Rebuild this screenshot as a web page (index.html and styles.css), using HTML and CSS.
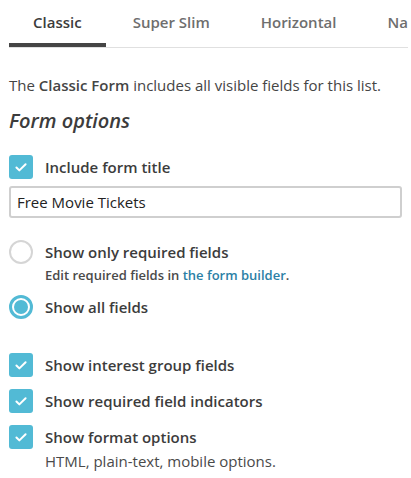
FILE: index.html
```html
<!doctype html>
<html>

<head>
    <meta charset="utf-8">
    <title>Form options</title>
    <meta name="viewport" content="width=device-width,initial-scale=1">
    <link rel="stylesheet" href="styles.css">
</head>

<body>
    <div class="tabs">
        <div class="tab active">Classic</div>
        <div class="tab">Super Slim</div>
        <div class="tab">Horizontal</div>
        <div class="tab">Naked</div>
    </div>

    <p class="intro">The <strong>Classic Form</strong> includes all visible fields for this list.</p>
    <h2 class="heading">Form options</h2>

    <label class="option">
        <span class="check checked">
            <svg viewBox="0 0 24 24" aria-hidden="true"><path d="M7 12.5l3.2 3.2L17 9" /></svg>
        </span>
        <span class="label">Include form title</span>
    </label>
    <input type="text" class="input" value="Free Movie Tickets">

    <div class="radios">
        <label class="option">
            <span class="radio"></span>
            <span class="label">Show only required fields</span>
        </label>
        <div class="hint">Edit required fields in <a href="#">the form builder</a>.</div>
        <label class="option">
            <span class="radio selected"></span>
            <span class="label">Show all fields</span>
        </label>
    </div>

    <div class="checks">
        <label class="option">
            <span class="check checked">
                <svg viewBox="0 0 24 24" aria-hidden="true"><path d="M7 12.5l3.2 3.2L17 9" /></svg>
            </span>
            <span class="label">Show interest group fields</span>
        </label>
        <label class="option">
            <span class="check checked">
                <svg viewBox="0 0 24 24" aria-hidden="true"><path d="M7 12.5l3.2 3.2L17 9" /></svg>
            </span>
            <span class="label">Show required field indicators</span>
        </label>
        <label class="option">
            <span class="check checked">
                <svg viewBox="0 0 24 24" aria-hidden="true"><path d="M7 12.5l3.2 3.2L17 9" /></svg>
            </span>
            <span class="label">Show format options</span>
        </label>
        <div class="note">HTML, plain-text, mobile options.</div>
    </div>
</body>

</html>
```

FILE: styles.css
```css
body {
    margin: 0;
    padding: 0 9px;
    width: 411px;
    box-sizing: border-box;
    overflow: hidden;
    font-family: "Open Sans", Arial, sans-serif;
    font-size: 15px;
    color: #454545;
    background: #fff;
}

/* Tabs */
.tabs {
    display: flex;
    white-space: nowrap;
    border-bottom: 1px solid #e0e0e0;
    height: 48px;
    box-sizing: border-box;
    margin-right: -6px;
    overflow: hidden;
}

.tab {
    padding: 12px 24px 0;
    margin-right: 3px;
    font-size: 15px;
    font-weight: 600;
    color: #6e6e6e;
    border-bottom: 5px solid transparent;
    margin-bottom: -1px;
}

.tab.active {
    color: #3c3c3c;
    border-bottom-color: #454545;
}

.intro {
    margin: 27px 0 0;
    line-height: 20px;
}

.intro strong {
    font-weight: 600;
}

.heading {
    margin: 12px 0 0;
    font-size: 20px;
    font-style: italic;
    font-weight: 600;
    line-height: 28px;
    color: #3c3c3c;
}

/* Checkbox / radio rows */
.option {
    display: flex;
    align-items: center;
    gap: 12px;
    height: 24px;
}

.label {
    font-size: 15px;
    font-weight: 600;
    color: #3c3c3c;
}

.heading + .option {
    margin-top: 20px;
}

.check {
    width: 24px;
    height: 24px;
    border-radius: 3px;
    background: #52bad5;
    display: flex;
    align-items: center;
    justify-content: center;
    flex: none;
}

.check svg {
    width: 22px;
    height: 22px;
    fill: none;
    stroke: #fff;
    stroke-width: 2.2;
    stroke-linecap: round;
    stroke-linejoin: round;
}

.radio {
    width: 24px;
    height: 24px;
    box-sizing: border-box;
    border-radius: 50%;
    border: 2px solid #d5d5d5;
    flex: none;
    position: relative;
}

.radio.selected {
    border: 3px solid #52bad5;
}

.radio.selected::after {
    content: "";
    position: absolute;
    left: 2px;
    top: 2px;
    width: 14px;
    height: 14px;
    border-radius: 50%;
    background: #52bad5;
}

.input {
    display: block;
    width: 100%;
    height: 32px;
    margin-top: 7px;
    padding: 0 6px;
    box-sizing: border-box;
    border: 2px solid #cfcfcf;
    border-radius: 3px;
    font-family: inherit;
    font-size: 15px;
    color: #222;
}

.radios {
    margin-top: 22px;
}

.hint {
    margin: 1px 0 10px 36px;
    font-size: 13px;
    font-weight: 600;
    line-height: 20px;
    color: #4a4a4a;
}

.hint a {
    color: #2b7fa6;
    text-decoration: none;
}

.checks {
    margin-top: 34px;
    display: flex;
    flex-direction: column;
    gap: 12px;
}

.note {
    margin: -10px 0 0 36px;
    font-size: 15px;
    line-height: 20px;
    color: #4a4a4a;
}
```
